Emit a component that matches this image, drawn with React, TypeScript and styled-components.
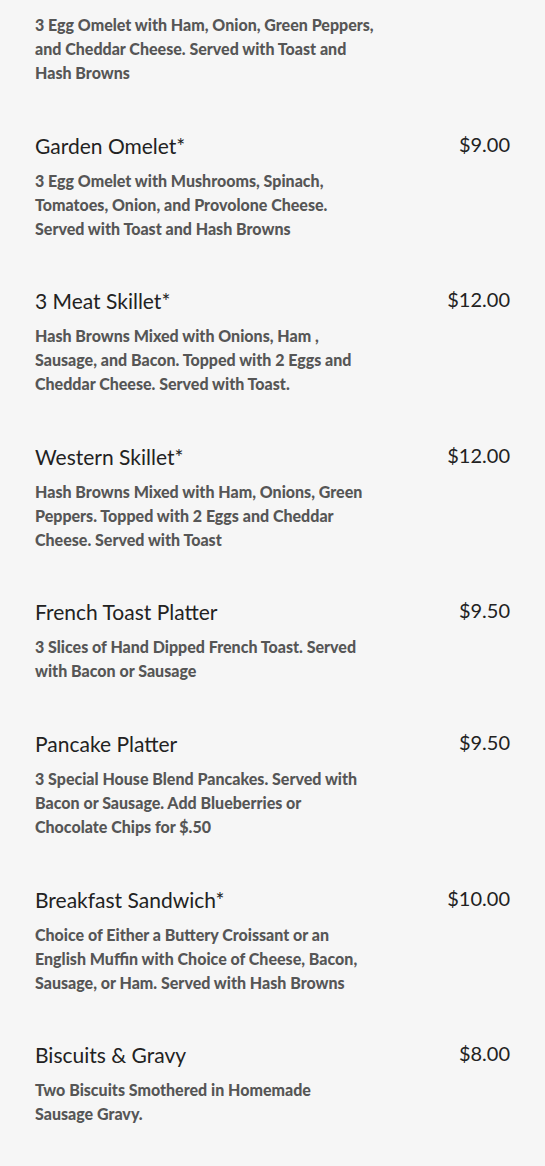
import React from 'react'
import styled, { createGlobalStyle } from 'styled-components'

const GlobalStyle = createGlobalStyle`
    html, body {
        margin: 0;
        padding: 0;
        background: #f6f6f6;
    }
    body {
        font-family: 'Lato', 'Liberation Sans', sans-serif;
    }
`

// lines kept as on the printed menu so the wraps stay put
const menu = [
    { name: 'Western Omelet*', price: '$10.00', desc: ['3 Egg Omelet with Ham, Onion, Green Peppers,', 'and Cheddar Cheese. Served with Toast and', 'Hash Browns'] },
    { name: 'Garden Omelet*', price: '$9.00', desc: ['3 Egg Omelet with Mushrooms, Spinach,', 'Tomatoes, Onion, and Provolone Cheese.', 'Served with Toast and Hash Browns'] },
    { name: '3 Meat Skillet*', price: '$12.00', desc: ['Hash Browns Mixed with Onions, Ham ,', 'Sausage, and Bacon. Topped with 2 Eggs and', 'Cheddar Cheese. Served with Toast.'] },
    { name: 'Western Skillet*', price: '$12.00', desc: ['Hash Browns Mixed with Ham, Onions, Green', 'Peppers. Topped with 2 Eggs and Cheddar', 'Cheese. Served with Toast'] },
    { name: 'French Toast Platter', price: '$9.50', desc: ['3 Slices of Hand Dipped French Toast. Served', 'with Bacon or Sausage'] },
    { name: 'Pancake Platter', price: '$9.50', desc: ['3 Special House Blend Pancakes. Served with', 'Bacon or Sausage. Add Blueberries or', 'Chocolate Chips for $.50'] },
    { name: 'Breakfast Sandwich*', price: '$10.00', desc: ['Choice of Either a Buttery Croissant or an', 'English Muffin with Choice of Cheese, Bacon,', 'Sausage, or Ham. Served with Hash Browns'] },
    { name: 'Biscuits & Gravy', price: '$8.00', desc: ['Two Biscuits Smothered in Homemade', 'Sausage Gravy.'] },
]

const Page = styled.div`
    position: relative;
    height: 1166px;
    overflow: hidden;
`

const TopFade = styled.div`
    position: absolute;
    top: 0;
    left: 0;
    right: 0;
    height: 7px;
    background: linear-gradient(#f6f6f6 50%, rgba(246, 246, 246, 0.8));
`

const List = styled.div`
    margin-top: -25px;
    padding: 0 35px;
    display: flex;
    flex-direction: column;
    gap: 45.6px;
`

const Item = styled.div`
    display: flex;
    flex-direction: column;
    gap: 8px;
`

const TitleRow = styled.div`
    display: flex;
    justify-content: space-between;
    align-items: flex-start;
    height: 30px;
`

const Name = styled.h3`
    margin: 0;
    font-size: 21px;
    font-weight: 400;
    line-height: 30px;
    color: #222;
`

const Price = styled.span`
    font-size: 20px;
    line-height: 26px;
    color: #222;
`

const Desc = styled.p`
    margin: 0;
    font-size: 16px;
    font-weight: 900;
    line-height: 24px;
    color: #565656;
`

const Line = styled.span`
    display: block;
    white-space: nowrap;
`

const App = () => {
    return (
        <Page>
            <GlobalStyle />
            <List>
                {menu.map(item => (
                    <Item key={item.name}>
                        <TitleRow>
                            <Name>{item.name}</Name>
                            <Price>{item.price}</Price>
                        </TitleRow>
                        <Desc>
                            {item.desc.map((l, i) => <Line key={i}>{l}</Line>)}
                        </Desc>
                    </Item>
                ))}
            </List>
            <TopFade />
        </Page>
    )
}

export default App
